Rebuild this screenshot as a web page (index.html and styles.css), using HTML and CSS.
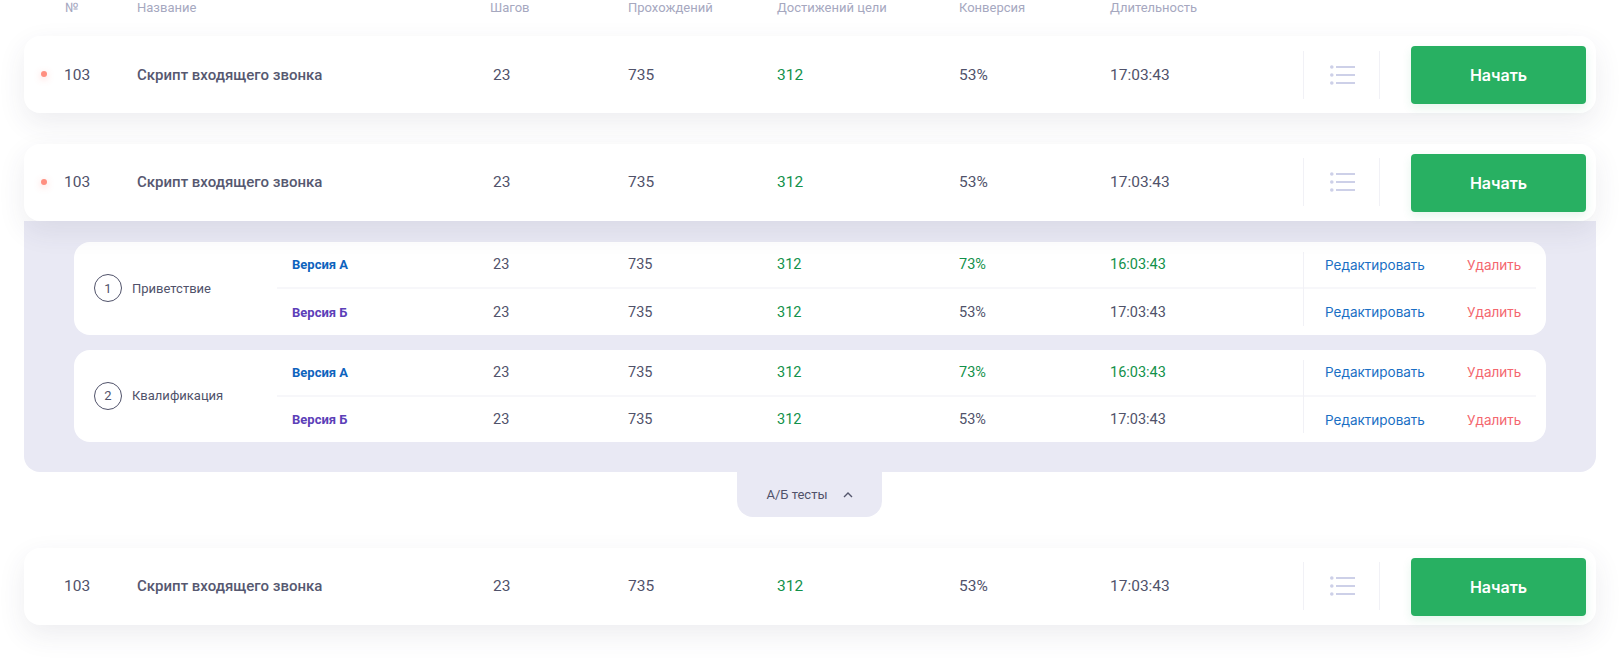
FILE: index.html
```html
<!DOCTYPE html>
<html lang="ru">
<head>
  <meta charset="UTF-8">
  <meta name="viewport" content="width=device-width, initial-scale=1.0">
  <title>Скрипты</title>
  <link rel="stylesheet" href="styles.css">
</head>
<body>
  <div class="page">
    <div class="table-head">
      <div>№</div>
      <div>Название</div>
      <div class="head-steps">Шагов</div>
      <div>Прохождений</div>
      <div>Достижений цели</div>
      <div>Конверсия</div>
      <div>Длительность</div>
    </div>

    <div class="script-row has-dot">
      <div>103</div>
      <div class="script-name">Скрипт входящего звонка</div>
      <div>23</div>
      <div>735</div>
      <div class="green">312</div>
      <div>53%</div>
      <div>17:03:43</div>
      <div class="menu-cell">
        <svg width="25" height="20" viewBox="0 0 25 20"><g fill="#cdd0e8"><circle cx="1.8" cy="2" r="1.8"/><circle cx="1.8" cy="10" r="1.8"/><circle cx="1.8" cy="18" r="1.8"/><rect x="6" y="1" width="19" height="2"/><rect x="6" y="9" width="19" height="2"/><rect x="6" y="17" width="19" height="2"/></g></svg>
      </div>
      <button class="start-btn">Начать</button>
    </div>

    <div class="script-row has-dot row-open">
      <div>103</div>
      <div class="script-name">Скрипт входящего звонка</div>
      <div>23</div>
      <div>735</div>
      <div class="green">312</div>
      <div>53%</div>
      <div>17:03:43</div>
      <div class="menu-cell">
        <svg width="25" height="20" viewBox="0 0 25 20"><g fill="#cdd0e8"><circle cx="1.8" cy="2" r="1.8"/><circle cx="1.8" cy="10" r="1.8"/><circle cx="1.8" cy="18" r="1.8"/><rect x="6" y="1" width="19" height="2"/><rect x="6" y="9" width="19" height="2"/><rect x="6" y="17" width="19" height="2"/></g></svg>
      </div>
      <button class="start-btn">Начать</button>
    </div>

    <div class="ab-panel">
      <div class="step-card">
        <div class="step-title"><span class="step-num">1</span>Приветствие</div>
        <div class="step-rows">
          <div class="version-row">
            <div class="version-a">Версия А</div>
            <div>23</div>
            <div>735</div>
            <div class="green">312</div>
            <div class="green">73%</div>
            <div class="green">16:03:43</div>
            <div class="edit-link">Редактировать</div>
            <div class="del-link">Удалить</div>
          </div>
          <div class="version-row">
            <div class="version-b">Версия Б</div>
            <div>23</div>
            <div>735</div>
            <div class="green">312</div>
            <div>53%</div>
            <div>17:03:43</div>
            <div class="edit-link">Редактировать</div>
            <div class="del-link">Удалить</div>
          </div>
        </div>
      </div>
      <div class="step-card">
        <div class="step-title"><span class="step-num">2</span>Квалификация</div>
        <div class="step-rows">
          <div class="version-row">
            <div class="version-a">Версия А</div>
            <div>23</div>
            <div>735</div>
            <div class="green">312</div>
            <div class="green">73%</div>
            <div class="green">16:03:43</div>
            <div class="edit-link">Редактировать</div>
            <div class="del-link">Удалить</div>
          </div>
          <div class="version-row">
            <div class="version-b">Версия Б</div>
            <div>23</div>
            <div>735</div>
            <div class="green">312</div>
            <div>53%</div>
            <div>17:03:43</div>
            <div class="edit-link">Редактировать</div>
            <div class="del-link">Удалить</div>
          </div>
        </div>
      </div>
    </div>
    <div class="ab-tab">
      А/Б тесты
      <svg width="10" height="6" viewBox="0 0 10 6"><path d="M1 5l4-4 4 4" fill="none" stroke="#54566c" stroke-width="1.4"/></svg>
    </div>

    <div class="script-row last-row">
      <div class="row-num">103</div>
      <div class="script-name">Скрипт входящего звонка</div>
      <div>23</div>
      <div>735</div>
      <div class="green">312</div>
      <div>53%</div>
      <div>17:03:43</div>
      <div class="menu-cell">
        <svg width="25" height="20" viewBox="0 0 25 20"><g fill="#cdd0e8"><circle cx="1.8" cy="2" r="1.8"/><circle cx="1.8" cy="10" r="1.8"/><circle cx="1.8" cy="18" r="1.8"/><rect x="6" y="1" width="19" height="2"/><rect x="6" y="9" width="19" height="2"/><rect x="6" y="17" width="19" height="2"/></g></svg>
      </div>
      <button class="start-btn">Начать</button>
    </div>
  </div>
</body>
</html>
```

FILE: styles.css
```css
* {
  box-sizing: border-box;
}
html, body {
  margin: 0;
  height: 666px;
  overflow: hidden;
  background: #fff;
}
.page {
  padding: 0 24px;
  font-family: Roboto, "Noto Sans", sans-serif;
  color: #50526a;
}
.table-head {
  display: grid;
  grid-template-columns: 72px 353px 138px 149px 182px 151px 1fr;
  height: 16px;
  padding-left: 41px;
  margin-bottom: 20px;
  font-size: 13px;
  line-height: 15px;
  color: #a6a8bf;
}
.script-row {
  position: relative;
  z-index: 2;
  display: grid;
  grid-template-columns: 73px 356px 135px 149px 182px 151px 193px 77px 175px;
  align-items: center;
  height: 77px;
  padding-left: 40px;
  padding-bottom: 1px;
  margin-bottom: 31px;
  border-radius: 16px;
  background: #fff;
  font-size: 15.5px;
  box-shadow: 0 10px 28px rgba(60, 60, 90, 0.09);
}
.table-head + .script-row {
  padding-bottom: 0;
}
.has-dot::before {
  content: "";
  position: absolute;
  left: 17px;
  top: 35px;
  width: 6px;
  height: 6px;
  border-radius: 50%;
  background: #ff8f80;
  box-shadow: 0 2px 7px rgba(255, 120, 110, 0.35);
}
.row-open {
  margin-bottom: 0;
}
.last-row {
  margin-bottom: 0;
  margin-top: 31px;
}
.script-name {
  font-size: 15px;
  font-weight: 500;
  color: #565870;
}
.green {
  color: #12914a;
}
.menu-cell {
  display: flex;
  align-items: center;
  justify-content: center;
  height: 48px;
  padding-left: 1px;
  border-left: 1px solid #f1f1f6;
  border-right: 1px solid #f1f1f6;
}
.start-btn {
  grid-column: 9;
  align-self: start;
  height: 58px;
  margin-top: 9.5px;
  margin-left: 31px;
  width: 175px;
  border: none;
  border-radius: 4px;
  background: #28b062;
  color: #fff;
  font-family: Inter, Roboto, sans-serif;
  font-size: 16px;
  font-weight: 600;
  box-shadow: 0 4px 10px rgba(40, 176, 98, 0.12);
}
.ab-panel {
  position: relative;
  display: flex;
  flex-direction: column;
  gap: 15px;
  height: 251px;
  padding: 21px 50px 0;
  border-radius: 0 0 16px 16px;
  background: #e9e9f4;
}
.step-card {
  display: flex;
  height: 92.5px;
  padding-right: 10px;
  border-radius: 16px;
  background: #fff;
}
.step-title {
  display: flex;
  align-items: center;
  width: 203px;
  padding-left: 20px;
  font-size: 13px;
}
.step-num {
  display: flex;
  align-items: center;
  justify-content: center;
  width: 28px;
  height: 28px;
  margin-right: 10px;
  border: 1px solid #50526a;
  border-radius: 50%;
}
.step-rows {
  position: relative;
  flex: 1;
}
/* vertical divider stops short of the card edges */
.step-rows::after {
  content: "";
  position: absolute;
  left: 1026px;
  top: 10px;
  bottom: 9px;
  width: 1px;
  background: #f1f1f6;
}
.version-row {
  display: grid;
  grid-template-columns: 201px 135px 149px 182px 151px 192px 165px 1fr;
  align-items: center;
  height: 45px;
  padding-left: 15px;
  font-size: 14.5px;
}
.version-row + .version-row {
  height: 48px;
  border-top: 2px solid #f7f7fa;
}
.version-a, .version-b {
  font-size: 13px;
  font-weight: 700;
}
.version-a {
  color: #0e63bd;
}
.version-b {
  color: #5c40b8;
}
.edit-link {
  padding-left: 23px;
  font-family: Inter, Roboto, sans-serif;
  font-size: 13.5px;
  color: #1a6fc4;
}
.del-link {
  font-family: Inter, Roboto, sans-serif;
  font-size: 13.5px;
  color: #f4666e;
}
.ab-tab {
  display: flex;
  align-items: center;
  justify-content: center;
  gap: 15px;
  width: 145px;
  height: 45px;
  margin-left: 713px;
  border-radius: 0 0 16px 16px;
  background: #e9e9f4;
  font-size: 13px;
}
```
